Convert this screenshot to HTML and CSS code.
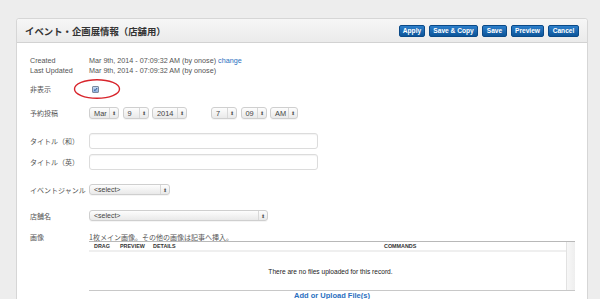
FILE: index.html
```html
<!DOCTYPE html>
<html lang="ja">
<head>
<meta charset="utf-8">
<title>イベント・企画展情報（店舗用）</title>
<link rel="stylesheet" href="styles.css">
</head>
<body>
<div class="panel">
  <div class="panel-head">
    <h1 class="title">イベント・企画展情報（店舗用）</h1>
    <div class="actions">
      <button class="btn">Apply</button>
      <button class="btn">Save &amp; Copy</button>
      <button class="btn">Save</button>
      <button class="btn">Preview</button>
      <button class="btn">Cancel</button>
    </div>
  </div>
  <div class="panel-body">
    <div class="row meta">
      <div class="label">Created</div>
      <div class="value">Mar 9th, 2014 - 07:09:32 AM (by onose) <a class="link">change</a></div>
      <div class="label">Last Updated</div>
      <div class="value">Mar 9th, 2014 - 07:09:32 AM (by onose)</div>
    </div>
    <div class="row r-hide">
      <div class="label jp">非表示</div>
      <div class="value check-wrap">
        <span class="checkbox"><svg viewBox="0 0 8 8" width="7" height="7"><path d="M1.6 4.2 L3.3 5.8 L6.6 1.6" fill="none" stroke="#1d4f8f" stroke-width="1.5"/></svg></span>
        <svg class="circle" width="48" height="22" viewBox="0 0 48 22"><ellipse cx="24" cy="11" rx="22.5" ry="9.3" fill="none" stroke="#d8242b" stroke-width="1.4"/></svg>
      </div>
    </div>
    <div class="row r-date">
      <div class="label jp">予約投稿</div>
      <div class="value selects">
        <span class="sel w-mar"><span class="sel-t">Mar</span><span class="sel-a">&#x2B0D;</span></span>
        <span class="sel w-d"><span class="sel-t">9</span><span class="sel-a">&#x2B0D;</span></span>
        <span class="sel w-y"><span class="sel-t">2014</span><span class="sel-a">&#x2B0D;</span></span>
        <span class="spacer"></span>
        <span class="sel w-d"><span class="sel-t">7</span><span class="sel-a">&#x2B0D;</span></span>
        <span class="sel w-d"><span class="sel-t">09</span><span class="sel-a">&#x2B0D;</span></span>
        <span class="sel w-am"><span class="sel-t">AM</span><span class="sel-a">&#x2B0D;</span></span>
      </div>
    </div>
    <div class="row r-t1">
      <div class="label jp">タイトル（和）</div>
      <div class="value"><span class="input"></span></div>
    </div>
    <div class="row r-t2">
      <div class="label jp">タイトル（英）</div>
      <div class="value"><span class="input"></span></div>
    </div>
    <div class="row r-genre">
      <div class="label jp">イベントジャンル</div>
      <div class="value"><span class="sel w-genre"><span class="sel-t">&lt;select&gt;</span><span class="sel-a">&#x2B0D;</span></span></div>
    </div>
    <div class="row r-store">
      <div class="label jp">店舗名</div>
      <div class="value"><span class="sel w-store"><span class="sel-t">&lt;select&gt;</span><span class="sel-a">&#x2B0D;</span></span></div>
    </div>
    <div class="row r-img">
      <div class="label jp">画像</div>
      <div class="value">
        <div class="note jp">1枚メイン画像。その他の画像は記事へ挿入。</div>
        <div class="files">
          <div class="files-main">
            <div class="files-head">
              <span class="c-drag">DRAG</span>
              <span class="c-prev">PREVIEW</span>
              <span class="c-det">DETAILS</span>
              <span class="c-cmd">COMMANDS</span>
            </div>
            <div class="files-empty">There are no files uploaded for this record.</div>
          </div>
          <div class="files-side"></div>
        </div>
        <div class="upload"><a class="link strong">Add or Upload File(s)</a></div>
      </div>
    </div>
  </div>
</div>
</body>
</html>
```

FILE: styles.css
```css
* { box-sizing: border-box; }
html, body { margin: 0; padding: 0; }
body {
  background: #ededed;
  font-family: "Liberation Sans", "Noto Sans CJK JP", sans-serif;
  color: #4a4a4a;
  height: 299px;
  overflow: hidden;
}
.panel {
  margin: 18px 12px 0 16px;
  background: #fff;
  border: 1px solid #d6d6d6;
  border-radius: 3px;
  height: 320px;
}
.panel-head {
  height: 24px;
  display: flex;
  align-items: center;
  justify-content: space-between;
  padding: 0 8px 0 8px;
  background: linear-gradient(#f6f6f6, #ebebeb);
  border-bottom: 1px solid #d2d2d2;
  border-radius: 3px 3px 0 0;
}
.title {
  margin: 0;
  font-family: "Noto Sans CJK JP", sans-serif;
  font-size: 9.4px;
  font-weight: 700;
  color: #333;
  line-height: 12px;
}
.actions { display: flex; gap: 4px; }
.btn {
  height: 12px;
  padding: 0;
  border: 1px solid #0b4a88;
  border-radius: 2px;
  background: linear-gradient(#2d7fcb, #0d5599);
  color: #fff;
  font-family: "Liberation Sans", sans-serif;
  font-size: 6.6px;
  font-weight: 700;
  line-height: 10px;
  white-space: nowrap;
  cursor: pointer;
}
.actions .btn:nth-child(1) { width: 26px; }
.actions .btn:nth-child(2) { width: 49px; }
.actions .btn:nth-child(3) { width: 25px; }
.actions .btn:nth-child(4) { width: 33px; }
.actions .btn:nth-child(5) { width: 31px; }

.panel-body { padding: 13px 0 0 13px; }
.row {
  display: grid;
  grid-template-columns: 59px 1fr;
  align-items: center;
  font-size: 7px;
}
.label { color: #555; }
.jp { font-family: "Noto Sans CJK JP", sans-serif; }
.meta { line-height: 9.7px; color: #555; font-size: 7.2px; }
.value { color: #555; }
.link { color: #2a6fc0; text-decoration: none; }
.link.strong { font-weight: 700; color: #2a6fc0; }

.r-hide { margin-top: 9px; height: 10px; }
.check-wrap { position: relative; height: 10px; display: flex; align-items: center; padding-left: 3px; }
.checkbox {
  width: 7px; height: 7px;
  border: 1px solid #7b8ba0;
  border-radius: 1px;
  background: linear-gradient(#c9daf0, #8fb0de);
  display: inline-flex; align-items: center; justify-content: center;
}
.checkbox svg { display: block; }
.circle { position: absolute; left: -16px; top: -6px; }

.r-date { margin-top: 13px; }
.selects { display: flex; gap: 3.5px; align-items: center; }
.spacer { width: 17px; }
.sel {
  display: inline-flex;
  align-items: center;
  height: 12px;
  border: 1px solid #cfcfcf;
  border-radius: 3px;
  background: linear-gradient(#fdfdfd, #e9e9e9);
  color: #444;
  font-size: 7.4px;
  box-shadow: 0 1px 0 rgba(0,0,0,0.04);
}
.sel-t { flex: 1; padding-left: 4px; white-space: nowrap; overflow: hidden; }
.sel-a {
  width: 9px; height: 100%;
  border-left: 1px solid #d8d8d8;
  font-size: 5px; color: #555;
  display: flex; align-items: center; justify-content: center;
}
.w-mar { width: 30px; }
.w-d { width: 26px; }
.w-y { width: 35px; }
.w-am { width: 28px; }
.w-genre { width: 81px; height: 11px; font-size: 7px; }
.w-store { width: 179px; height: 11px; font-size: 7px; }

.input {
  display: block;
  width: 229px;
  height: 16px;
  border: 1px solid #dcdcdc;
  border-radius: 3px;
  background: #fff;
  box-shadow: inset 0 1px 1px rgba(0,0,0,0.05);
}
.r-t1 { margin-top: 14px; }
.r-t2 { margin-top: 5px; }
.r-genre { margin-top: 14px; }
.r-store { margin-top: 15px; }
.r-img { margin-top: 12px; align-items: start; }
.r-img .label { line-height: 8px; }
.note { line-height: 8px; color: #555; font-size: 7px; }

.files {
  width: 486px;
  height: 50px;
  display: flex;
  border-top: 1px solid #b8b8b8;
  border-bottom: 1px solid #c8c8c8;
}
.files-main { flex: 1; display: flex; flex-direction: column; }
.files-side {
  width: 9px;
  border-left: 1px solid #e2e2e2;
  background: linear-gradient(90deg, #f7f7f7, #eeeeee);
}
.files-head {
  position: relative;
  height: 10px;
  border-bottom: 2px solid #efefef;
  font-size: 5.4px;
  font-weight: 700;
  color: #333;
  line-height: 8px;
}
.files-head span { position: absolute; top: 0; }
.c-drag { left: 5px; }
.c-prev { left: 31px; }
.c-det { left: 64px; }
.c-cmd { left: 295px; }
.files-empty {
  flex: 1;
  display: flex;
  align-items: center;
  justify-content: center;
  font-size: 6.6px;
  color: #222;
  padding-left: 6px;
}
.upload {
  width: 486px;
  text-align: center;
  font-size: 7.5px;
  line-height: 8px;
  margin-top: 1px;
}
```
